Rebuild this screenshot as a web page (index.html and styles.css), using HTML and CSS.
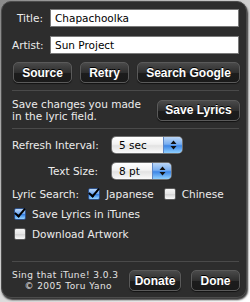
FILE: index.html
```html
<!DOCTYPE html>
<html lang="en">
<head>
    <meta charset="UTF-8">
    <title>Sing that iTune! Preferences</title>
    <link rel="stylesheet" href="styles.css">
</head>
<body>
    <div class="panel">
        <div class="field">
            <label class="field-label" for="title">Title:</label>
            <input class="text-input" type="text" id="title" value="Chapachoolka">
        </div>
        <div class="field">
            <label class="field-label" for="artist">Artist:</label>
            <input class="text-input" type="text" id="artist" value="Sun Project">
        </div>

        <div class="button-row">
            <button class="hud-button btn-source">Source</button>
            <button class="hud-button btn-retry">Retry</button>
            <button class="hud-button btn-google">Search Google</button>
        </div>

        <div class="separator"></div>

        <div class="save-row">
            <p class="save-text">Save changes you made<br>in the lyric field.</p>
            <button class="hud-button btn-save">Save Lyrics</button>
        </div>

        <div class="separator"></div>

        <div class="popup-row">
            <span class="popup-label">Refresh Interval:</span>
            <div class="popup popup-wide">
                <span class="popup-value">5 sec</span>
                <span class="popup-arrows">
                    <svg width="7" height="10" viewBox="0 0 7 10"><path d="M3.5 0.5 L6.5 4 H0.5 Z M3.5 9.5 L6.5 6 H0.5 Z" fill="#111"/></svg>
                </span>
            </div>
        </div>
        <div class="popup-row">
            <span class="popup-label">Text Size:</span>
            <div class="popup popup-narrow">
                <span class="popup-value">8 pt</span>
                <span class="popup-arrows">
                    <svg width="7" height="10" viewBox="0 0 7 10"><path d="M3.5 0.5 L6.5 4 H0.5 Z M3.5 9.5 L6.5 6 H0.5 Z" fill="#111"/></svg>
                </span>
            </div>
        </div>

        <div class="search-row">
            <span class="search-label">Lyric Search:</span>
            <span class="check on"></span>
            <span class="check-text">Japanese</span>
            <span class="check off chinese"></span>
            <span class="check-text">Chinese</span>
        </div>
        <div class="check-row">
            <span class="check on"></span>
            <span class="check-text">Save Lyrics in iTunes</span>
        </div>
        <div class="check-row">
            <span class="check off"></span>
            <span class="check-text">Download Artwork</span>
        </div>

        <div class="separator footer-sep"></div>

        <div class="footer">
            <p class="credits">Sing that iTune! 3.0.3<br>&copy; 2005 Toru Yano</p>
            <button class="hud-button btn-donate">Donate</button>
            <button class="hud-button btn-done">Done</button>
        </div>
    </div>
</body>
</html>
```

FILE: styles.css
```css
* {
    margin: 0;
    padding: 0;
    box-sizing: border-box;
}

body {
    width: 250px;
    height: 302px;
    overflow: hidden;
    background: linear-gradient(135deg, #8a8a8a 0%, #d8d8d8 50%, #ffffff 100%);
    font-family: 'DejaVu Sans', sans-serif;
    font-size: 10.5px;
    color: #ececec;
}

.panel {
    width: 246px;
    height: 297px;
    margin: 1px 0 0 1px;
    padding: 7px 7px 0 10px;
    background: #2d2d2d;
    border: 1px solid #4c4c4c;
    border-radius: 10px;
    box-shadow: 1px 2px 2px rgba(0, 0, 0, 0.8);
}

/* text fields */
.field {
    display: flex;
    align-items: center;
    height: 18px;
    margin-bottom: 9px;
}

.field-label {
    width: 31px;
    margin-right: 7px;
    text-align: right;
    white-space: nowrap;
}

.text-input {
    flex: 1;
    height: 18px;
    padding: 0 4px;
    border: 1px solid #7a7a7a;
    background: #ffffff;
    font-family: 'DejaVu Sans', sans-serif;
    font-size: 10.5px;
    color: #000;
    outline: none;
}

/* hud buttons */
.hud-button {
    height: 21px;
    border: 1px solid #5a5a5a;
    border-radius: 5px;
    background: linear-gradient(#4a4a4a 0%, #2e2e2e 50%, #1c1c1c 51%, #1a1a1a 100%);
    box-shadow: 0 1px 1px rgba(0, 0, 0, 0.6);
    color: #fff;
    font-family: 'Liberation Sans', sans-serif;
    font-weight: bold;
    font-size: 12px;
    text-shadow: 0 -1px 0 #000;
    cursor: pointer;
}

.button-row {
    display: flex;
    gap: 8px;
    margin: -1px -1px 0 1px;
}

.btn-source { width: 59px; }
.btn-retry { width: 49px; }
.btn-google { width: 103px; }

.separator {
    height: 1px;
    background: #4a4a4a;
    margin-top: 7px;
}

/* save lyrics */
.save-row {
    display: flex;
    align-items: center;
    justify-content: space-between;
    height: 37px;
    padding-top: 1px;
}

.save-text {
    line-height: 12px;
    white-space: nowrap;
}

.btn-save {
    width: 83px;
    margin-right: -1px;
}

.save-row + .separator {
    margin-top: 0;
}

/* popups */
.popup-row {
    display: flex;
    align-items: center;
    height: 16px;
    margin-top: 8px;
}

.popup-row + .popup-row {
    margin-top: 10px;
}

.popup-label {
    width: 86px;
    margin-right: 14px;
    text-align: right;
    white-space: nowrap;
}

.popup {
    display: flex;
    height: 16px;
    border-radius: 4px;
    overflow: hidden;
    box-shadow: 0 0 0 1px #6f6f6f, 0 1px 1px rgba(0, 0, 0, 0.6);
    background: linear-gradient(#ffffff 0%, #f2f2f2 45%, #e2e2e2 55%, #fafafa 100%);
    color: #000;
}

.popup-wide { width: 70px; }
.popup-narrow { width: 59px; }

.popup-value {
    flex: 1;
    padding-left: 7px;
    line-height: 16px;
}

.popup-arrows {
    display: flex;
    align-items: center;
    justify-content: center;
    width: 19px;
    border-left: 1px solid #5e86c4;
    background: linear-gradient(#bcd7f7 0%, #78aef0 45%, #3d86e6 55%, #8fd0ff 100%);
}

/* checkboxes */
.search-row,
.check-row {
    display: flex;
    align-items: center;
    height: 14px;
}

.search-row {
    margin-top: 8px;
}

.check-row {
    margin-top: 6px;
}

.search-label {
    width: 76px;
    white-space: nowrap;
}

.check {
    position: relative;
    width: 12px;
    height: 12px;
    margin-right: 6px;
    border-radius: 2px;
    border: 1px solid #5b5b5b;
    flex-shrink: 0;
}

.check-row .check {
    margin-left: 2px;
    margin-right: 6px;
}

.check.off {
    background: linear-gradient(#f4f4f4 0%, #e4e4e4 50%, #d2d2d2 51%, #fafafa 100%);
}

.check.on {
    border-color: #2d4f86;
    background: linear-gradient(#b9d6f8 0%, #74aaf0 45%, #3580e4 55%, #96d4ff 100%);
}

.check.on::after {
    content: "";
    position: absolute;
    left: 2px;
    top: -3px;
    width: 4px;
    height: 9px;
    border-right: 2.5px solid #000;
    border-bottom: 2.5px solid #000;
    transform: rotate(40deg);
}

.check.chinese {
    margin-left: 10px;
}

.check-text {
    white-space: nowrap;
}

/* footer */
.footer-sep {
    margin-top: 20px;
}

.footer {
    display: flex;
    align-items: center;
    height: 27px;
    margin-top: 5px;
}

.credits {
    width: 100px;
    margin-right: 17px;
    font-size: 9px;
    letter-spacing: 0.45px;
    line-height: 11px;
    padding-top: 1px;
    text-align: right;
    white-space: nowrap;
    color: #e4e4e4;
}

.btn-donate {
    width: 53px;
    margin-right: 10px;
}

.btn-done {
    width: 50px;
    margin-right: -1px;
}
```
